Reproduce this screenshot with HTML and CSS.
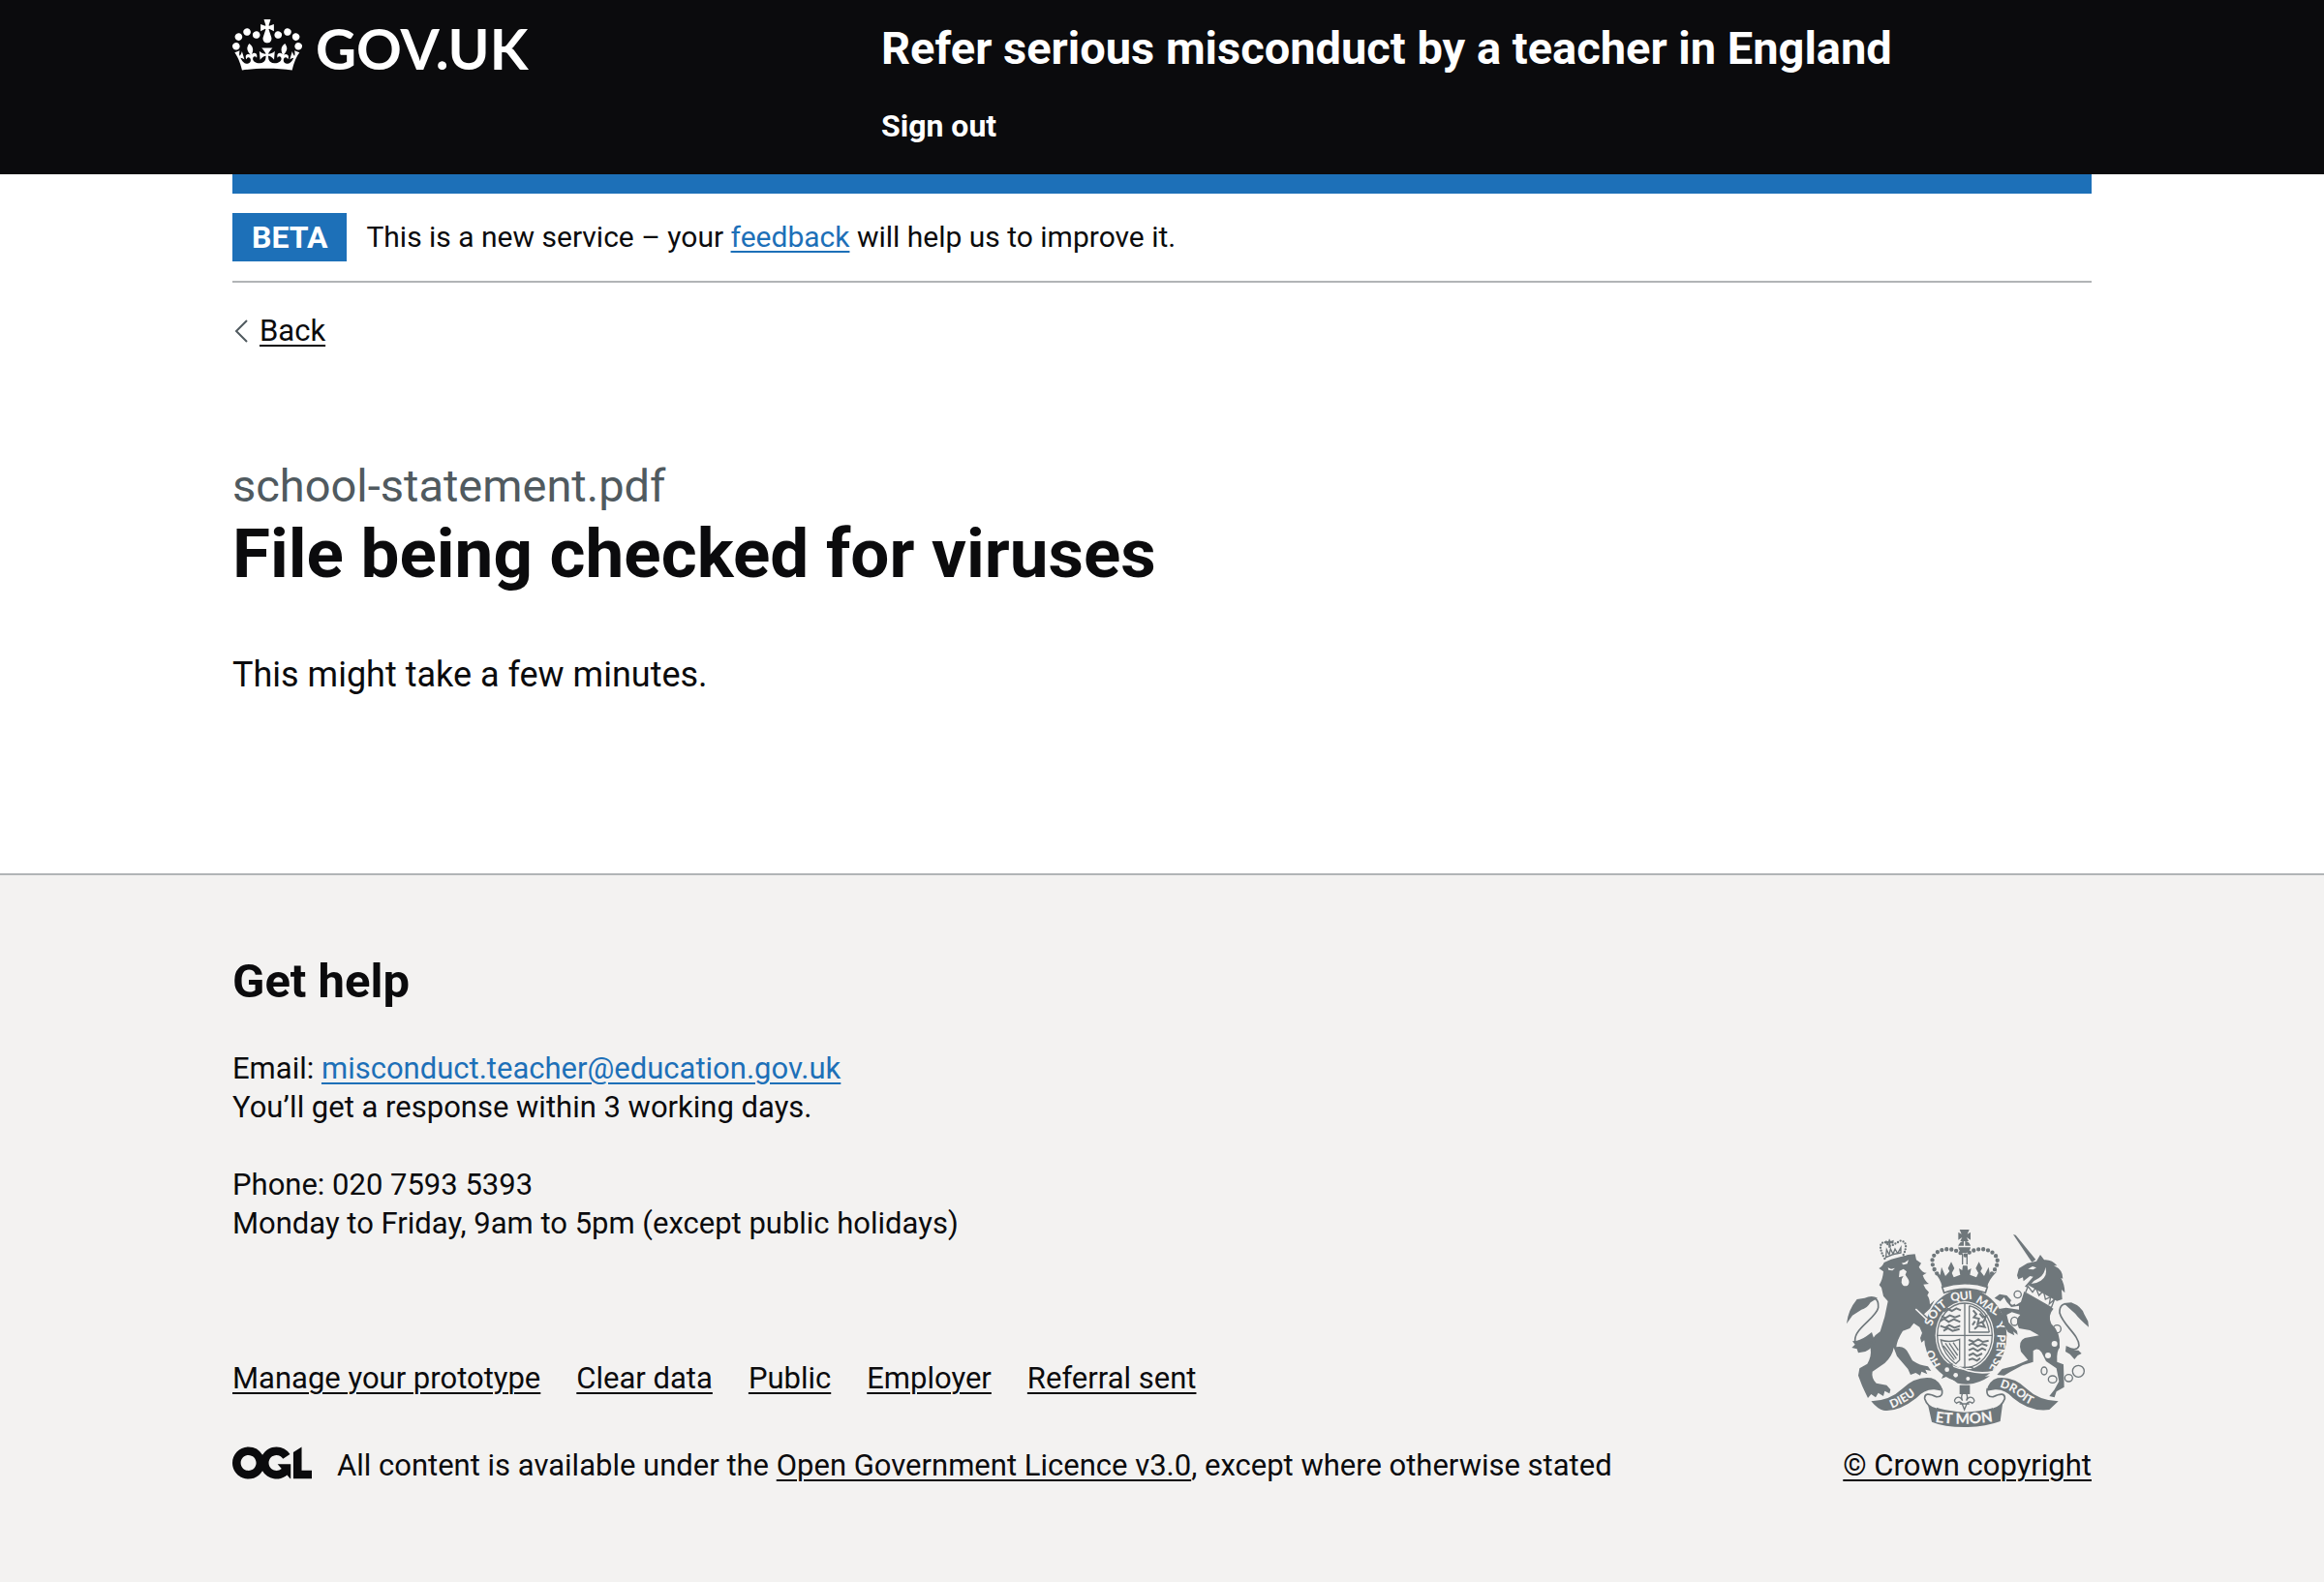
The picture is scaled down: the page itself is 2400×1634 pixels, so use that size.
FILE: index.html
```html
<!DOCTYPE html>
<html lang="en">
<head>
<meta charset="utf-8">
<meta name="viewport" content="width=device-width, initial-scale=1">
<title>File being checked for viruses – Refer serious misconduct by a teacher in England</title>
<link rel="stylesheet" href="styles.css">
</head>
<body>
<header class="header">
  <div class="container header__grid">
    <a class="logo" href="#">
      <svg class="logo__crown" viewBox="0 0 132 97" aria-hidden="true"><path fill="currentColor" fill-rule="evenodd" d="M25 30.2c3.5 1.5 7.7-.2 9.1-3.7 1.5-3.6-.2-7.8-3.9-9.2-3.6-1.4-7.6.3-9.1 3.9-1.4 3.5.3 7.5 3.9 9zM9 39.5c3.6 1.5 7.8-.2 9.2-3.7 1.5-3.6-.2-7.8-3.9-9.1-3.6-1.5-7.6.2-9.1 3.8-1.4 3.5.3 7.5 3.8 9zM4.4 57.2c3.5 1.5 7.7-.2 9.1-3.8 1.5-3.6-.2-7.7-3.9-9.1-3.5-1.5-7.6.3-9.1 3.8-1.4 3.5.3 7.6 3.9 9.1zm38.3-21.4c3.5 1.5 7.7-.2 9.1-3.8 1.5-3.6-.2-7.7-3.9-9.1-3.6-1.5-7.6.3-9.1 3.8-1.3 3.6.4 7.7 3.9 9.1zm64.4-5.6c-3.6 1.5-7.8-.2-9.1-3.7-1.5-3.6.2-7.8 3.8-9.2 3.6-1.4 7.7.3 9.2 3.9 1.3 3.5-.4 7.5-3.9 9zm15.9 9.3c-3.6 1.5-7.7-.2-9.1-3.7-1.5-3.6.2-7.8 3.7-9.1 3.6-1.5 7.7.2 9.2 3.8 1.5 3.5-.3 7.5-3.8 9zm4.7 17.7c-3.6 1.5-7.8-.2-9.2-3.8-1.5-3.6.2-7.7 3.9-9.1 3.6-1.5 7.7.3 9.2 3.8 1.3 3.5-.4 7.6-3.9 9.1zM89.3 35.8c-3.6 1.5-7.8-.2-9.2-3.8-1.4-3.6.2-7.7 3.9-9.1 3.6-1.5 7.7.3 9.2 3.8 1.4 3.6-.3 7.7-3.9 9.1zM69.7 17.7l8.9 4.7V9.3l-8.9 2.8c-.2-.3-.5-.6-.9-.9L72.4 0H59.6l3.5 11.2c-.3.3-.6.5-.9.9l-8.8-2.8v13.1l8.8-4.7c.3.3.6.7.9.9l-5 15.4v.1c-.2.8-.4 1.6-.4 2.4 0 4.1 3.1 7.5 7 8.1h.2c.3 0 .7.1 1 .1.4 0 .7 0 1-.1h.2c4-.6 7.1-4.1 7.1-8.1 0-.8-.1-1.7-.4-2.4V34l-5.1-15.4c.4-.2.7-.6 1-.9zM66 92.8c16.9 0 32.8 1.1 47.1 3.2 4-16.9 8.9-26.7 14-33.5l-9.6-3.4c1 4.9 1.1 7.2 0 10.2-1.5-1.4-3-4.3-4.2-8.7L108.6 76c2.8-2 5-3.2 7.5-3.3-4.4 9.4-10 11.9-13.6 11.2-4.3-.8-6.3-4.6-5.6-7.9 1-4.7 5.7-5.9 8-.5 4.3-8.7-3-11.4-7.6-8.8 7.1-7.2 7.9-13.5 2.1-21.1-8 6.1-8.1 12.3-4.5 20.8-4.7-5.4-12.1-2.5-9.5 6.2 3.4-5.2 7.9-2 7.2 3.1-.6 4.3-6.4 7.8-13.5 7.2-10.3-.9-10.9-8-11.2-13.8 2.5-.5 7.1 1.8 11 7.3L80.2 60c-4.1 4.4-8 5.3-12.3 5.4 1.4-4.4 8-11.6 8-11.6H55.5s6.4 7.2 7.9 11.6c-4.2-.1-8-1-12.3-5.4l1.4 16.4c3.9-5.5 8.5-7.7 10.9-7.3-.3 5.8-.9 12.8-11.1 13.8-7.2.6-12.9-2.9-13.5-7.2-.7-5 3.8-8.3 7.1-3.1 2.7-8.7-4.6-11.6-9.4-6.2 3.7-8.5 3.6-14.7-4.6-20.8-5.8 7.6-5 13.9 2.2 21.1-4.7-2.6-11.9.1-7.7 8.8 2.3-5.5 7.1-4.2 8.1.5.7 3.3-1.3 7.1-5.7 7.9-3.5.7-9-1.8-13.5-11.2 2.5.1 4.7 1.3 7.5 3.3l-4.7-15.4c-1.2 4.4-2.7 7.2-4.3 8.7-1.1-3-.9-5.3 0-10.2l-9.5 3.4c5 6.9 9.9 16.7 14 33.5 14.8-2.1 30.8-3.2 47.7-3.2z"/></svg>
      <span>GOV.UK</span>
    </a>
    <div class="header__content">
      <a class="header__service" href="#">Refer serious misconduct by a teacher in England</a>
      <nav aria-label="Account"><a class="header__link" href="#">Sign out</a></nav>
    </div>
  </div>
</header>
<div class="container page">
  <div class="banner">
    <strong class="tag">BETA</strong>
    <span>This is a new service – your <a class="link" href="#">feedback</a> will help us to improve it.</span>
  </div>
  <a class="back" href="#">
    <svg class="back__arrow" viewBox="0 0 14 24" aria-hidden="true"><path d="M13 1 2 12l11 11" fill="none" stroke="currentColor" stroke-width="2"/></svg>
    <span class="back__text">Back</span>
  </a>
  <main class="main">
    <h1 class="title"><span class="caption">school-statement.pdf</span>File being checked for viruses</h1>
    <p class="lead">This might take a few minutes.</p>
  </main>
</div>
<footer class="footer">
  <div class="container footer__columns">
    <div class="footer__content">
      <h2 class="footer__heading">Get help</h2>
      <p class="footer__text">Email: <a class="link" href="mailto:misconduct.teacher@education.gov.uk">misconduct.teacher@education.gov.uk</a><br>You’ll get a response within 3 working days.</p>
      <p class="footer__text">Phone: 020 7593 5393<br>Monday to Friday, 9am to 5pm (except public holidays)</p>
      <ul class="footer__links">
        <li><a href="#">Manage your prototype</a></li>
        <li><a href="#">Clear data</a></li>
        <li><a href="#">Public</a></li>
        <li><a href="#">Employer</a></li>
        <li><a href="#">Referral sent</a></li>
      </ul>
      <div class="licence">
        <svg class="licence__logo" viewBox="0 0 483.2 195.7" aria-hidden="true"><path fill="currentColor" d="M421.5 142.8V.1l-50.7 32.3v161.1h112.4v-50.7zm-122.3-9.6A47.12 47.12 0 0 1 221 97.8c0-26 21.1-47.1 47.1-47.1 16.7 0 31.4 8.7 39.7 21.8l42.7-27.2A97.63 97.63 0 0 0 268.1 0c-36.5 0-68.3 20.1-85.1 49.7A98 98 0 0 0 97.8 0C43.9 0 0 43.9 0 97.8s43.9 97.8 97.8 97.8c36.5 0 68.3-20.1 85.1-49.7a97.76 97.76 0 0 0 149.6 25.4l19.4 22.2h3v-87.8h-80l24.3 27.5zM97.8 145c-26 0-47.1-21.1-47.1-47.1s21.1-47.1 47.1-47.1 47.1 21.1 47.1 47.1S123.8 145 97.8 145"/></svg>
        <span>All content is available under the <a href="#">Open Government Licence v3.0</a>, except where otherwise stated</span>
      </div>
    </div>
    <a class="crest" href="#">
      <svg class="crest__arms" viewBox="72 60 750 612" aria-hidden="true">
        <defs>
          <path id="garter-start" d="M336 362A107 107 0 0 1 440 281"/>
          <path id="scroll-left" d="M212 614Q262 594 292 566T330 546"/>
          <path id="scroll-mid" d="M346 656Q437 670 542 652"/>
          <path id="scroll-right" d="M546 548Q588 560 610 582T700 622"/>
        </defs>
        <!-- Lion -->
        <g class="ink">
          <path d="M172 180Q182 176 188 162L210 152 262 138 284 136 288 154 303 164 296 176Q306 194 320 194L308 202Q314 220 327 228L310 230Q316 246 327 254L322 264Q330 274 330 292L345 278 330 305 312 322Q325 330 345 372L348 388 342 392 345 412 330 406 320 420 313 402 304 410 300 396 306 380 298 362 280 350 268 366 246 374Q228 402 226 424 252 418 264 444L276 466Q300 482 324 484L334 498 316 494 322 508 304 500 300 512 286 504 270 510 262 492 228 452 218 426Q214 452 190 474L152 500Q148 520 164 536L196 542 208 556 205 568 190 560 186 576 170 566 162 580 148 570 138 582Q128 562 120 544L108 512 112 490 136 476Q150 452 146 428 144 396 176 376L190 330 200 282 186 266 180 240 173 232Q184 214 186 190Z"/>
          <path d="M72 352Q76 310 104 276L128 272Q150 262 168 272L146 286Q134 306 118 308L90 326Z"/>
          <path d="M150 378Q120 402 104 404L90 406 98 416 88 426 104 430 108 442 130 438Q150 430 160 408Z"/>
          <path d="m204 88 5 8 9-4-1 12-9-2v14h-6v-14l-9 2v-10l8 3Z"/>
        </g>
        <path class="line line--tail" d="M140 278Q172 262 170 302C164 334 96 366 98 404Q100 432 152 408"/>
        <path class="line line--gap" d="m286 306 40 38"/>
        <path class="paper" d="m200 178 10 4 12-3-8 8-12-2Zm42-14 10-2 12-8-4 12-12 3ZM236 188l12-6 10 8-4 10 8 12q8 12-2 22-14 4-18-10 0-14 6-20l-14 4Z"/>
        <path class="paper" d="m276 356 6 12-4 14 12-8 2 16 10-6M188 160q40-20 68-20v-5q-36 0-70 19Z"/>
        <path class="line line--beads" d="M190 150Q164 104 190 98L208 112M248 138Q266 100 240 94L208 112"/>
        <path class="line" d="m194 142 2-20 8 16 4-18 8 16 6-16 8 14 10-18v16q-24 2-46 14Z"/>
        <!-- Crown -->
        <g class="ink">
          <path d="M422 60h30l-6 14 10-6v24l-12-8 6 12h-26l6-12-12 8V68l10 6Z"/>
          <circle cx="437" cy="114" r="19"/>
          <path d="M342 190 362 200 366 176 378 204 394 186 404 208 424 200 420 180 430 186 432 172h14l2 14 10-6-4 20 20 8 10-22 14 18 14-28 4 24 22-10Q510 218 508 238 440 216 368 238 364 214 342 190Z"/>
          <path d="m396 160 10 20-10 18-10-18ZM482 160l10 20-10 18-10-18Z"/>
        </g>
        <path class="line line--dots" d="M352 196Q326 160 346 136C370 112 412 118 434 140M522 196Q552 160 530 136C504 112 464 118 440 140"/>
        <path class="line" d="M431 134v34M445 134v34"/>
        <path class="paper" d="M418 110h40v5h-40ZM435 96h4v16h-4Z"/>
        <!-- Shield and garter -->
        <ellipse class="ink" cx="440" cy="388" rx="128" ry="145"/>
        <path class="line line--band" d="M368 238Q438 216 508 238L502 256Q438 232 374 256Z"/>
        <ellipse class="paper" cx="438" cy="388" rx="91" ry="106"/>
        <ellipse class="line" cx="438" cy="388" rx="85" ry="100"/>
        <path class="line" d="M438 288v212M352 388h172M452 296v82h62M452 296q50 10 62 82M434 487h28v8h-28Z"/>
        <path class="line line--bold" d="m372 314 14-8 12 6 14-8 14 6M366 328l12 6 14-8 16 6 16-6M362 344l12-8 14 10 16-8 20 8M362 358l16 6 12-8 16 8 18-6M372 374l14-8 14 8 22-6"/>
        <path class="line line--bold" d="m464 310 10 12-8 10 16 4-4 16 14-6 8 16-20-4-12 10M484 320l10 12 10-4-8 18M470 344l-8 12"/>
        <path class="line line--bold" d="m450 402 16 6 14-8 14 8 18-4M450 418l12-6 16 10 14-8 16 6M450 434l14-6 14 8 14-8 12 6M450 450l14-6 12 8 16-8M450 464l12-4 14 6 10-8"/>
        <path class="line" d="M364 402Q392 412 422 400V464L410 476Q372 446 364 402ZM378 412l34 48M390 412l26 38M402 410l16 24M372 420l34 44"/>
        <text class="motto"><textPath href="#garter-start" startOffset="2">SOIT</textPath></text>
        <text class="motto" transform="translate(395 282) rotate(-6)">QUI</text>
        <text class="motto" transform="translate(470 284) rotate(33)">MAL</text>
        <text class="motto" transform="translate(532 352) rotate(66)">Y</text>
        <text class="motto" transform="translate(539 384) rotate(94)">PEN</text>
        <text class="motto" transform="translate(532 456) rotate(118)">SE</text>
        <text class="motto" transform="translate(364 480) rotate(-118)">HO</text>
        <g class="ink">
          <path d="M364 482Q380 470 400 478L404 492Q456 524 516 514 468 548 416 536L386 514 366 522 376 500Z"/>
          <path d="M422 542h32v28h-32Z"/>
        </g>
        <path class="line line--gap" d="M402 476Q460 514 528 500"/>
        <circle class="paper" cx="410" cy="511" r="7"/><circle class="paper" cx="448" cy="522" r="6"/><circle class="paper" cx="383" cy="494" r="7"/>
        <path class="line" d="M437 556q-14 18-6 34-8-16-20-8-10 10 2 16 8-8 16 0l8 20 8-20q8-8 16 0 12-6 2-16-12-8-20 8 8-16-6-34ZM422 600h30"/>
        <!-- Unicorn -->
        <g class="ink">
          <path d="m588 75 8 2 62 76-12 8Z"/>
          <path d="M600 202 606 180 632 164 660 158 672 138 684 154Q708 152 724 172L714 172Q742 184 742 212L736 210Q748 230 748 256L738 246 740 276 722 282 624 236 650 206 640 204 620 220 618 208 604 214Z"/>
          <path d="M622 252 714 304Q694 326 706 352 736 378 732 426 722 436 724 470L744 478 746 548 722 562 716 580 700 576 716 556 730 530 722 490 690 468 676 440Q664 424 650 436L650 470 618 480 580 500 560 512 538 510 554 492 592 482 634 464 612 438Q602 406 624 396L668 388 640 372 606 366Q592 340 610 324L584 316 568 324 574 348 600 374 602 386 588 376 592 388 572 378 556 350 552 318 544 306 566 302 606 308 606 296 582 300 568 284 560 270 548 282 530 272 546 260 568 264 596 294 612 284Z"/>
          <path d="m744 288 24-2Q800 298 808 322L820 344 822 362Q794 338 780 320Z"/>
          <path d="M752 420Q776 436 790 434L800 444 788 450 778 462 764 446 750 438Z"/>
        </g>
        <path class="line line--tail" d="M772 294Q730 280 732 318C742 356 792 386 792 420Q784 440 754 424"/>
        <path class="paper" d="m634 182 14-8 12 4-10 6ZM688 176q8 26-14 42-16 10-30 10 10-12 24-18 18-12 20-34Z"/>
        <path class="paper" d="m634 232 90 50-10 24-90-50Z"/>
        <path class="line" d="m626 256 8-20 14 18 10-14 10 24 14-14 6 26 16-8-4 22 16-14-10 26Z"/>
        <g class="chain">
          <circle cx="602" cy="261" r="11"/><ellipse cx="592" cy="344" rx="11" ry="13"/><circle cx="724" cy="368" r="12"/><ellipse cx="684" cy="498" rx="9" ry="12"/><ellipse cx="710" cy="524" rx="13" ry="11"/><ellipse cx="760" cy="520" rx="12" ry="11"/><circle cx="790" cy="499" r="18"/>
        </g>
        <circle class="paper" cx="716" cy="414" r="9"/><circle class="paper" cx="696" cy="450" r="9"/><circle class="paper" cx="586" cy="286" r="7"/>
        <!-- Scroll -->
        <g class="ink">
          <path d="M148 592Q206 590 246 552 286 514 334 520 362 528 370 560L344 556Q314 554 288 582 232 626 186 620 170 618 148 592Z"/>
          <path d="M728 592Q668 590 628 552 588 514 540 520 512 528 506 560L532 556Q562 554 588 582 640 626 700 618Z"/>
          <path d="M322 594Q340 618 437 626 536 620 556 594L548 654Q500 672 437 672T336 656Z"/>
        </g>
        <path class="line line--fold" d="M366 552Q374 580 350 578 312 560 314 584 322 610 350 616M508 552Q502 580 526 578 564 560 562 584 552 610 526 616"/>
        <text class="motto"><textPath href="#scroll-left">DIEU</textPath></text>
        <text class="motto motto--wide"><textPath href="#scroll-mid">ET MON</textPath></text>
        <text class="motto"><textPath href="#scroll-right">DROIT</textPath></text>
      </svg>
      <span class="crest__text">© Crown copyright</span>
    </a>
  </div>
</footer>
</body>
</html>
```
FILE: styles.css
```css
* { box-sizing: border-box; }

html { background: #f3f2f1; }

body {
  margin: 0;
  background: #fff;
  color: #0b0b0d;
  font: 31px/40px Roboto, Arial, sans-serif;
}

a {
  color: inherit;
  text-decoration-thickness: 2px;
  text-underline-offset: 4px;
}

.link { color: #1d70b8; }

.container {
  width: 80%;
  max-width: 1920px;
  margin: 0 auto;
}

/* Header */
.header {
  background: #0b0b0d;
  color: #fff;
}

.header a { text-decoration: none; }

.header__grid {
  display: grid;
  grid-template-columns: 1fr 2fr;
  column-gap: 45px;
  padding: 20px 0 25px;
}

.logo {
  display: flex;
  align-items: flex-start;
  align-self: start;
  gap: 14px;
  font: 700 58px/60px Lato, Arial, sans-serif;
}

.logo__crown {
  width: 72px;
  height: 53px;
}

.header__content {
  display: grid;
  gap: 25px;
}

.header__service {
  font-size: 47px;
  line-height: 60px;
  font-weight: 700;
}

.header__link {
  font-size: 32px;
  line-height: 50px;
  font-weight: 700;
}

.page { border-top: 20px solid #1d70b8; }

/* Phase banner */
.banner {
  display: flex;
  align-items: center;
  gap: 20px;
  padding: 20px 0;
  border-bottom: 2px solid #b1b4b6;
  font-size: 30px;
  line-height: 50px;
}

.tag {
  padding: 0 20px;
  background: #1d70b8;
  color: #fff;
  font-size: 32px;
}

/* Back link */
.back {
  display: inline-flex;
  align-items: center;
  gap: 12px;
  margin-top: 30px;
  text-decoration: none;
}

.back__arrow {
  width: 14px;
  height: 24px;
  margin-left: 2px;
  color: #505a5f;
}

.back__text {
  text-decoration: underline 2px;
}

/* Content */
.main { padding: 108px 0 180px; }

.title {
  margin: 0 0 60px;
  font-size: 71px;
  line-height: 80px;
}

.caption {
  display: block;
  color: #505a5f;
  font-size: 47px;
  line-height: 60px;
  font-weight: 400;
}

.lead {
  margin: 0;
  font-size: 36px;
  line-height: 50px;
}

/* Footer */
.footer {
  padding: 80px 0 96px;
  border-top: 2px solid #b1b4b6;
  background: #f3f2f1;
}

.footer__columns {
  display: flex;
  flex-wrap: wrap;
  align-items: flex-end;
  justify-content: space-between;
}

.footer__heading {
  margin: 0 0 40px;
  font-size: 49px;
  line-height: 60px;
}

.footer__text { margin: 0 0 40px; }

.footer__links {
  display: flex;
  flex-wrap: wrap;
  gap: 10px 37px;
  margin: 120px 0 50px;
  padding: 0;
  list-style: none;
}

.licence {
  display: flex;
  gap: 26px;
}

.licence__logo {
  flex: none;
  width: 82px;
  height: 34px;
}

.crest {
  display: grid;
  justify-items: center;
  gap: 20px;
  text-decoration: none;
}

.crest__arms {
  width: 250px;
  height: 204px;
}

.crest__text { text-decoration: underline 2px; }

/* Royal arms */
.ink { fill: #6f777b; }

.paper { fill: #f3f2f1; }

.line,
.chain {
  fill: none;
  stroke: #6f777b;
  stroke-width: 4px;
}

.line--tail { stroke-width: 5px; }

.line--bold { stroke-width: 6px; }

.line--band,
.line--fold {
  fill: #f3f2f1;
  stroke-width: 5px;
}

.line--gap {
  stroke: #f3f2f1;
  stroke-width: 5px;
}

.line--dots,
.line--beads {
  stroke-linecap: round;
  stroke-width: 13px;
  stroke-dasharray: 0 15;
}

.line--beads {
  stroke-width: 7px;
  stroke-dasharray: 0 9;
}

.motto {
  fill: #f3f2f1;
  font: 900 36px Lato, Arial, sans-serif;
}

.motto--wide { font-size: 46px; }
```
